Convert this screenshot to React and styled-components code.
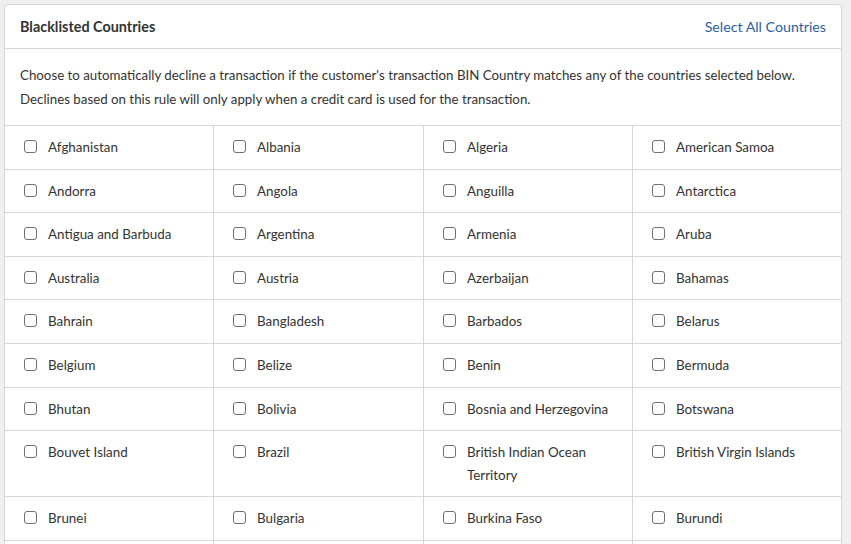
import React from "react";
import styled, { createGlobalStyle } from "styled-components";

const GlobalStyle = createGlobalStyle`
  html, body {
    margin: 0;
    padding: 0;
    background: #efefef;
  }
  body {
    font-family: Lato, "Open Sans", sans-serif;
    color: #333;
    overflow: hidden;
  }
`;

const Page = styled.div`
  padding: 4px 0 0 4px;
`;

const Card = styled.div`
  width: 836px;
  background: #fff;
  border: 1px solid #d6d6d6;
  border-radius: 4px 4px 0 0;
`;

const Header = styled.div`
  display: flex;
  justify-content: space-between;
  align-items: center;
  height: 43px;
  padding: 0 15px;
  border-bottom: 1px solid #d6d6d6;
`;

const Title = styled.h3`
  margin: 0;
  font-size: 14.4px;
  font-weight: 700;
  color: #333;
`;

const SelectAll = styled.a`
  font-size: 14.2px;
  color: #2b5ea7;
  text-decoration: none;
  cursor: pointer;
`;

const Description = styled.p`
  margin: 0;
  padding: 14px 15px 14px;
  font-size: 13.3px;
  line-height: 24px;
  color: #333;
  border-bottom: 1px solid #d6d6d6;
`;

const Grid = styled.div`
  display: grid;
  grid-template-columns: 209px 210px 209px 208px;
`;

const Cell = styled.label`
  display: flex;
  align-items: flex-start;
  gap: 11px;
  padding: 10px 19px;
  font-size: 13.4px;
  line-height: 22.6px;
  color: #333;
  border-bottom: 1px solid #d6d6d6;
  border-right: ${(p) => (p.$last ? "none" : "1px solid #d6d6d6")};
`;

const Box = styled.span`
  flex: none;
  width: 11px;
  height: 11px;
  margin-top: 4px;
  border: 1px solid #707070;
  border-radius: 3px;
  background: #fff;
`;

const countries = [
  "Afghanistan", "Albania", "Algeria", "American Samoa",
  "Andorra", "Angola", "Anguilla", "Antarctica",
  "Antigua and Barbuda", "Argentina", "Armenia", "Aruba",
  "Australia", "Austria", "Azerbaijan", "Bahamas",
  "Bahrain", "Bangladesh", "Barbados", "Belarus",
  "Belgium", "Belize", "Benin", "Bermuda",
  "Bhutan", "Bolivia", "Bosnia and Herzegovina", "Botswana",
  "Bouvet Island", "Brazil", "British Indian Ocean Territory", "British Virgin Islands",
  "Brunei", "Bulgaria", "Burkina Faso", "Burundi",
  "Cambodia", "Cameroon", "Canada", "Cape Verde",
];

const App = () => (
  <Page>
    <GlobalStyle />
    <Card>
      <Header>
        <Title>Blacklisted Countries</Title>
        <SelectAll>Select All Countries</SelectAll>
      </Header>
      <Description>
        Choose to automatically decline a transaction if the customer's
        transaction BIN Country matches any of the countries selected below.
        <br />
        Declines based on this rule will only apply when a credit card is used
        for the transaction.
      </Description>
      <Grid>
        {countries.map((c, i) => (
          <Cell key={c} $last={i % 4 === 3}>
            <Box />
            <span>{c}</span>
          </Cell>
        ))}
      </Grid>
    </Card>
  </Page>
);

export default App;
